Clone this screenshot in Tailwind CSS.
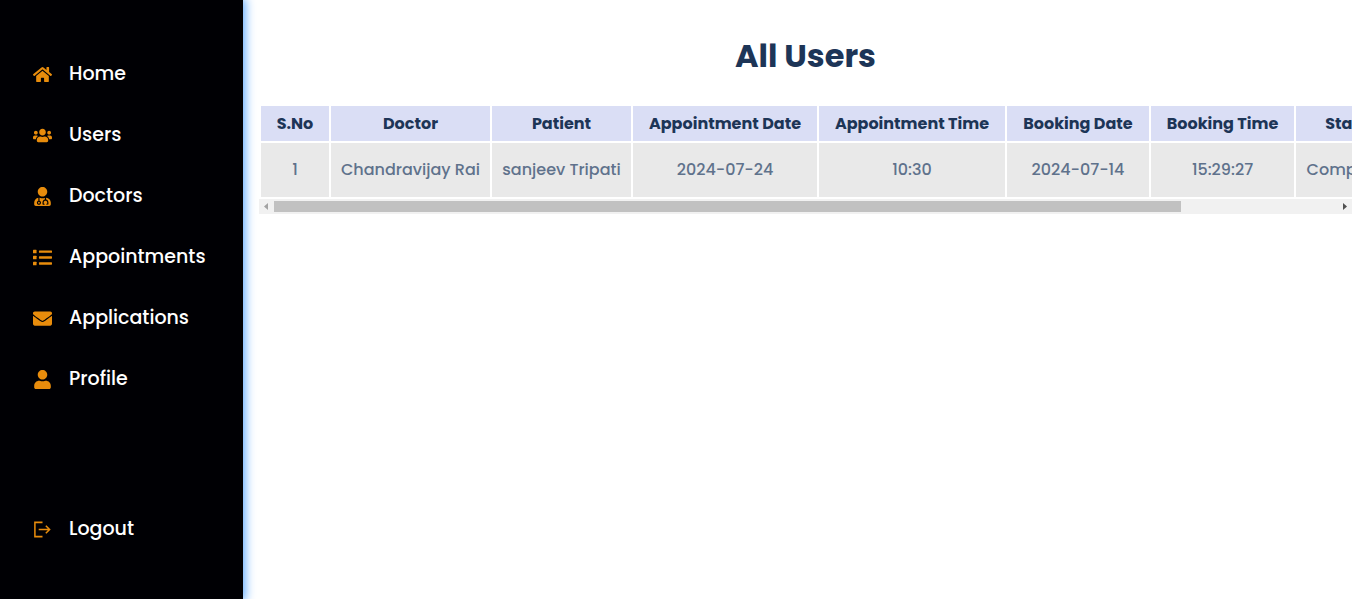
<!DOCTYPE html>
<html lang="en">
<head>
<meta charset="utf-8">
<meta name="viewport" content="width=device-width, initial-scale=1">
<title>All Users</title>
<script src="https://cdn.jsdelivr.net/npm/@tailwindcss/browser@4"></script>
</head>
<body class="flex min-h-screen bg-white font-['Poppins','Inter',sans-serif]">
<aside class="flex w-[243px] shrink-0 flex-col bg-[#000004] pt-[58px] pb-[54px] pl-[33px] text-[19px] leading-8 font-medium text-white shadow-[0_0_10px_2px_#55a6ff]">
  <nav class="flex flex-1 flex-col gap-[29px]">
    <a href="#" class="flex items-center gap-[17px]"><svg class="size-[19px] fill-[#e88c0c]" viewBox="0 0 576 512"><path d="M280.37 148.26L96 300.11V464a16 16 0 0 0 16 16l112.06-.29a16 16 0 0 0 15.92-16V368a16 16 0 0 1 16-16h64a16 16 0 0 1 16 16v95.64a16 16 0 0 0 16 16.05L464 480a16 16 0 0 0 16-16V300L295.67 148.26a12.19 12.19 0 0 0-15.3 0zM571.6 251.47L488 182.56V44.05a12 12 0 0 0-12-12h-56a12 12 0 0 0-12 12v72.61L318.47 43a48 48 0 0 0-61 0L4.34 251.47a12 12 0 0 0-1.6 16.9l25.5 31A12 12 0 0 0 45.15 301l235.22-193.74a12.19 12.19 0 0 1 15.3 0L530.9 301a12 12 0 0 0 16.9-1.6l25.5-31a12 12 0 0 0-1.7-16.93z"/></svg>Home</a>
    <a href="#" class="flex items-center gap-[17px]"><svg class="size-[19px] fill-[#e88c0c]" viewBox="0 0 640 512"><path d="M96 224c35.3 0 64-28.7 64-64s-28.7-64-64-64-64 28.7-64 64 28.7 64 64 64zm448 0c35.3 0 64-28.7 64-64s-28.7-64-64-64-64 28.7-64 64 28.7 64 64 64zm32 32h-64c-17.6 0-33.5 7.1-45.1 18.6 40.3 22.1 68.9 62 75.1 109.4h66c17.7 0 32-14.3 32-32v-32c0-35.3-28.7-64-64-64zm-256 0c61.9 0 112-50.1 112-112S381.9 32 320 32 208 82.1 208 144s50.1 112 112 112zm76.8 32h-8.3c-20.8 10-43.9 16-68.5 16s-47.6-6-68.5-16h-8.3C179.6 288 128 339.6 128 403.2V432c0 26.5 21.5 48 48 48h288c26.5 0 48-21.5 48-48v-28.8c0-63.6-51.6-115.2-115.2-115.2zm-223.7-13.4C161.5 263.1 145.6 256 128 256H64c-35.3 0-64 28.7-64 64v32c0 17.7 14.3 32 32 32h65.9c6.3-47.4 34.9-87.3 75.2-109.4z"/></svg>Users</a>
    <a href="#" class="flex items-center gap-[17px]"><svg class="size-[19px] fill-[#e88c0c]" viewBox="0 0 448 512"><path d="M224 256c70.7 0 128-57.3 128-128S294.7 0 224 0 96 57.3 96 128s57.3 128 128 128zM104 424c0 13.3 10.7 24 24 24s24-10.7 24-24-10.7-24-24-24-24 10.7-24 24zm216-135.4v49c36.5 7.4 64 39.8 64 78.4v41.7c0 7.6-5.4 14.2-12.9 15.7l-32.2 6.4c-4.3.9-8.5-1.9-9.4-6.3l-3.1-15.7c-.9-4.3 1.9-8.6 6.3-9.4l19.3-3.9V416c0-62.8-96-65.1-96 1.9v26.7l19.3 3.9c4.3.9 7.1 5.1 6.3 9.4l-3.1 15.7c-.9 4.3-5.1 7.1-9.4 6.3l-31.2-4.2c-7.9-1.1-13.8-7.8-13.8-15.9V416c0-38.6 27.5-70.9 64-78.4v-45.2c-2.2.7-4.4 1.1-6.6 1.9-18 6.3-37.3 9.8-57.4 9.8s-39.4-3.5-57.4-9.8c-7.4-2.6-14.9-4.2-22.6-5.2v81.6c23.1 6.9 40 28.1 40 53.4 0 30.9-25.1 56-56 56s-56-25.1-56-56c0-25.3 16.9-46.5 40-53.4v-80.4C48.5 301 0 355.8 0 422.4v44.8C0 491.9 20.1 512 44.8 512h358.4c24.7 0 44.8-20.1 44.8-44.8v-44.8c0-72-56.8-130.3-128-133.8z"/></svg>Doctors</a>
    <a href="#" class="flex items-center gap-[17px]"><svg class="size-[19px] fill-[#e88c0c]" viewBox="0 0 512 512"><rect y="48" width="96" height="96" rx="16"/><rect y="208" width="96" height="96" rx="16"/><rect y="368" width="96" height="96" rx="16"/><rect x="160" y="64" width="352" height="64" rx="16"/><rect x="160" y="224" width="352" height="64" rx="16"/><rect x="160" y="384" width="352" height="64" rx="16"/></svg>Appointments</a>
    <a href="#" class="flex items-center gap-[17px]"><svg class="size-[19px] fill-[#e88c0c]" viewBox="0 0 512 512"><path d="M502.3 190.8c3.9-3.1 9.7-.2 9.7 4.7V400c0 26.5-21.5 48-48 48H48c-26.5 0-48-21.5-48-48V195.6c0-5 5.7-7.8 9.7-4.7 22.4 17.4 52.1 39.5 154.1 113.6 21.1 15.4 56.7 47.8 92.2 47.6 35.7.3 72-32.8 92.3-47.6 102-74.1 131.6-96.3 154-113.7zM256 320c23.2.4 56.6-29.2 73.4-41.4 132.7-96.3 142.8-104.7 173.4-128.7 5.8-4.5 9.2-11.5 9.2-18.9v-19c0-26.5-21.5-48-48-48H48c-26.5 0-48 21.5-48 48v19c0 7.4 3.4 14.3 9.2 18.9 30.6 23.9 40.7 32.4 173.4 128.7 16.8 12.2 50.2 41.8 73.4 41.4z"/></svg>Applications</a>
    <a href="#" class="flex items-center gap-[17px]"><svg class="size-[19px] fill-[#e88c0c]" viewBox="0 0 448 512"><path d="M224 256c70.7 0 128-57.3 128-128S294.7 0 224 0 96 57.3 96 128s57.3 128 128 128zm89.6 32h-16.7c-22.2 10.2-46.9 16-72.9 16s-50.6-5.8-72.9-16h-16.7C60.2 288 0 348.2 0 422.4V464c0 26.5 21.5 48 48 48h352c26.5 0 48-21.5 48-48v-41.6c0-74.2-60.2-134.4-134.4-134.4z"/></svg>Profile</a>
  </nav>
  <button type="button" class="flex items-center gap-[17px] text-left"><svg class="size-[19px] fill-none stroke-[#e88c0c] stroke-[1.6]" viewBox="0 0 20 20"><path d="M10 2.500H2V17.500H10M6 10H17M13.500 6L17.500 10L13.500 14"/></svg>Logout</button>
</aside>
<main class="min-w-0 flex-1 pt-8 pr-[11px] pl-4 text-center">
  <h1 class="text-[32px] leading-12 font-bold text-[#1d3557]">All Users</h1>
  <div class="mt-6 overflow-hidden">
    <table class="w-[1281px] table-fixed border-separate border-spacing-[2px] text-[16px] leading-6 whitespace-nowrap">
      <colgroup><col class="w-[68px]"><col class="w-[159px]"><col class="w-[139px]"><col class="w-[184px]"><col class="w-[186px]"><col class="w-[142px]"><col class="w-[143px]"><col class="w-[112px]"><col></colgroup>
      <thead class="text-[#1d3557]">
        <tr class="h-[35px] bg-[#dadef5]"><th>S.No</th><th>Doctor</th><th>Patient</th><th>Appointment Date</th><th>Appointment Time</th><th>Booking Date</th><th>Booking Time</th><th>Status</th><th>Action</th></tr>
      </thead>
      <tbody class="font-medium text-[#5f728c]">
        <tr class="h-[54px] bg-[#e9e9e9]"><td>1</td><td>Chandravijay Rai</td><td>sanjeev Tripati</td><td>2024-07-24</td><td>10:30</td><td>2024-07-14</td><td>15:29:27</td><td>Completed</td><td></td></tr>
      </tbody>
    </table>
  </div>
  <div class="flex h-[15px] items-center bg-[#f1f1f1]" aria-hidden="true">
    <svg class="h-[15px] w-[15px] shrink-0 fill-[#a3a3a3]" viewBox="0 0 15 15"><path d="M9 4v7L5 7.500z"/></svg>
    <div class="flex-1"><div class="h-[11px] w-[85.3%] bg-[#c1c1c1]"></div></div>
    <svg class="h-[15px] w-[15px] shrink-0 fill-[#505050]" viewBox="0 0 15 15"><path d="M6 4v7L10 7.500z"/></svg>
  </div>
</main>
</body>
</html>
